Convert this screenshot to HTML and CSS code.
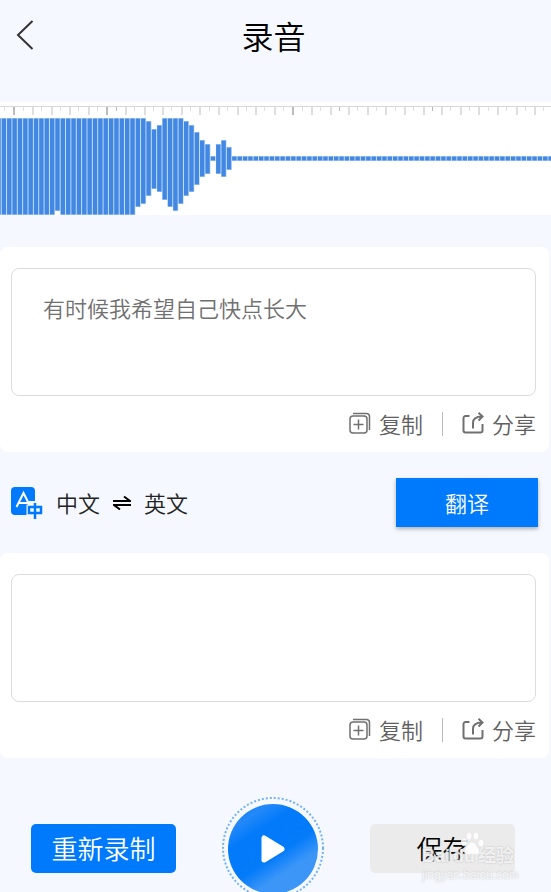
FILE: index.html
```html
<!DOCTYPE html>
<html lang="zh-CN">
<head>
  <meta charset="UTF-8">
  <meta name="viewport" content="width=device-width, initial-scale=1.0">
  <title>录音</title>
  <link rel="stylesheet" href="styles.css">
</head>
<body>
  <svg class="sprite" aria-hidden="true">
    <symbol id="icon-copy" viewBox="0 0 22 22">
      <rect x="1" y="4" width="17" height="17" rx="3"/>
      <path d="M4 1.5h14a3 3 0 0 1 2.500 3V18M9.5 7.5v10M4.5 12.5h10"/>
    </symbol>
    <symbol id="icon-share" viewBox="0 0 22 22">
      <path d="M7.500 4H3.500a2 2 0 0 0-2 2v12.500a2 2 0 0 0 2 2h15a2 2 0 0 0 2-2V12"/>
      <path d="M11 16.500V11q0-6.500 9-6.500M16.500 .8l4 3.700-4 4"/>
    </symbol>
  </svg>

  <div class="app">
    <header class="header">
      <button class="back" type="button" aria-label="返回">
        <svg width="18" height="32" viewBox="0 0 18 32"><path d="M16.500 2 2 16l14.500 14"/></svg>
      </button>
      <h1>录音</h1>
    </header>

    <svg class="wave" id="wave" role="img" aria-label="录音波形"></svg>

    <main>
      <section class="card">
        <textarea class="text" aria-label="识别文字">有时候我希望自己快点长大</textarea>
        <div class="tools">
          <button type="button"><svg><use href="#icon-copy"/></svg>复制</button>
          <span class="divider"></span>
          <button type="button"><svg class="share"><use href="#icon-share"/></svg>分享</button>
        </div>
      </section>

      <div class="translate">
        <svg class="lang-icon" width="33" height="33" viewBox="0 0 33 33" aria-hidden="true">
          <path class="lang-page" d="M4 1h16a4 4 0 0 1 4 4v10h-6v12q0 2 1 2H4a4 4 0 0 1-4-4V5a4 4 0 0 1 4-4z"/>
          <path class="lang-a" d="M5.500 21 12.500 7l7 14M8 17h9"/>
          <path class="lang-halo" d="M18 21h12v6H18zM24 17v16"/>
          <path class="lang-zh" d="M18 21h12v6H18zM24 17v16"/>
        </svg>
        <span>中文</span>
        <button class="swap" type="button" aria-label="交换语言">
          <svg width="18" height="16" viewBox="0 0 18 16"><path d="M0 6h17L11 1.500M18 10H1l6 4.500"/></svg>
        </button>
        <span>英文</span>
        <button class="btn-translate" type="button">翻译</button>
      </div>

      <section class="card">
        <textarea class="text" aria-label="翻译结果"></textarea>
        <div class="tools">
          <button type="button"><svg><use href="#icon-copy"/></svg>复制</button>
          <span class="divider"></span>
          <button type="button"><svg class="share"><use href="#icon-share"/></svg>分享</button>
        </div>
      </section>
    </main>

    <footer class="actions">
      <button class="btn" type="button">重新录制</button>
      <button class="play" type="button" aria-label="播放">
        <svg viewBox="0 0 102 102">
          <defs>
            <linearGradient id="blue" x1="0.1" y1="0" x2="0.75" y2="1">
              <stop offset="0" stop-color="#0a7cf8"/>
              <stop offset="0.16" stop-color="#2489f8"/>
              <stop offset="0.32" stop-color="#027afa"/>
              <stop offset="0.6" stop-color="#047bf9"/>
              <stop offset="0.78" stop-color="#3c96f8"/>
              <stop offset="1" stop-color="#3c96f8"/>
            </linearGradient>
          </defs>
          <circle class="ring" cx="51" cy="51" r="50"/>
          <circle cx="51" cy="52" r="45" fill="url(#blue)"/>
          <path class="triangle" d="M42 41v22l18-11z"/>
        </svg>
      </button>
      <div class="save">
        <button class="btn btn-light" type="button">保存</button>
        <div class="watermark">
          <svg width="24" height="24" viewBox="0 0 24 24" aria-hidden="true">
            <ellipse cx="4" cy="10" rx="3" ry="4"/>
            <ellipse cx="9" cy="4" rx="3" ry="4"/>
            <ellipse cx="16" cy="4" rx="3" ry="4"/>
            <ellipse cx="21" cy="11" rx="3" ry="4"/>
            <path d="M12 10c4 0 4 4 7 7 2 4-1 7-7 5-6 2-9-1-7-5 3-3 3-7 7-7z"/>
          </svg>
          <div class="brand">Bai<span>du</span><span>经验</span></div>
          <div class="site">jingyan.baidu.com</div>
        </div>
      </div>
    </footer>
  </div>

  <script>
    const wave = document.getElementById("wave");
    const step = 5.36;
    const middle = [54, 59];

    // [top, bottom] of the bars that are not full height
    const levels = {
      10: [16, 109], 25: [16, 105], 26: [16, 102], 27: [19, 94], 28: [27, 87],
      29: [23, 90], 30: [16, 98], 31: [16, 105], 32: [16, 109], 33: [16, 102],
      34: [19, 94], 35: [23, 90], 36: [30, 83], 37: [38, 75], 38: [42, 72],
      39: middle, 40: [42, 72], 41: [38, 75], 42: [45, 68]
    };

    function rect(x, y, width, height, name) {
      return `<rect class="${name}" x="${x}" y="${y}" width="${width}" height="${height}"/>`;
    }

    function draw() {
      const width = wave.clientWidth;
      let html = rect(0, 4, width, 1, "ruler");

      for (let i = 0; 4 + i * 9.3 < width; i++) {
        const long = i % 2 === 1;
        const strong = [1, 11, 12, 31, 36, 46].includes(i);
        html += rect(Math.round(4 + i * 9.3), 5, long ? 2 : 1, long ? 8 : 4, strong ? "tick strong" : "tick");
      }

      for (let i = -1; 1.4 + i * step < width; i++) {
        const [top, bottom] = levels[i] || (i < 39 ? [16, 113] : middle);
        const x = 1.4 + i * step;
        html += rect(x, top, step, bottom - top, "edge");
        html += rect(x + 0.3, top + 0.5, step - 1, bottom - top - 1, "bar");
      }

      wave.innerHTML = html;
    }

    draw();
    window.addEventListener("resize", draw);
  </script>
</body>
</html>
```

FILE: styles.css
```css
* {
  box-sizing: border-box;
  margin: 0;
  padding: 0;
}

body {
  font-family: "Noto Sans CJK SC", sans-serif;
  font-weight: 350;
  background: #f5f9ff;
  color: #222;
}

button, textarea {
  font: inherit;
  color: inherit;
  border: none;
  background: none;
}

button {
  cursor: pointer;
}

svg {
  display: block;
  fill: none;
}

.sprite {
  position: absolute;
  width: 0;
  height: 0;
}

.app {
  height: 100vh;
  overflow: hidden;
}

.header {
  display: grid;
  grid-template-columns: 48px 1fr 52px;
  align-items: start;
  height: 102px;
  padding-top: 11px;
}

.header h1 {
  font-size: 32px;
  font-weight: 350;
  line-height: 48px;
  text-align: center;
  color: #000;
}

.back {
  padding: 8px 16px;
}

.back path {
  stroke: #333;
  stroke-width: 2;
}

.wave {
  width: 100%;
  height: 113px;
  background: #fff;
}

.ruler {
  fill: #d8d8d6;
}

.tick {
  fill: #dededc;
}

.strong {
  fill: #bbb;
}

.edge {
  fill: #b8d6f6;
}

.bar {
  fill: #4288e3;
}

main {
  padding: 32px 2px 0 0;
}

.card {
  padding: 21px 13px 0 11px;
  background: #fff;
  border-radius: 8px;
}

.text {
  display: block;
  width: 100%;
  height: 128px;
  padding: 22px 31px;
  border: 1px solid #dcdcdc;
  border-radius: 8px;
  font-size: 22px;
  line-height: 32px;
  color: #707070;
  resize: none;
}

.tools {
  display: flex;
  align-items: center;
  justify-content: flex-end;
  height: 56px;
  font-size: 22px;
  line-height: 32px;
  color: #606060;
}

.tools button {
  display: flex;
  align-items: center;
  gap: 8px;
  padding-bottom: 2px;
}

.tools svg {
  width: 22px;
  height: 22px;
  stroke: #707070;
  stroke-width: 1.5;
}

.tools .share {
  stroke-width: 2;
}

.divider {
  width: 1px;
  height: 24px;
  margin: 0 19px;
  background: #bbb;
}

.translate {
  display: flex;
  align-items: center;
  height: 101px;
  padding: 0 11px;
  font-size: 22px;
  line-height: 32px;
}

.translate span {
  padding-bottom: 2px;
}

.lang-icon {
  margin-right: 12px;
}

.lang-page {
  fill: #007afc;
}

.lang-a {
  stroke: #fff;
  stroke-width: 2;
}

.lang-halo {
  stroke: #f5f9ff;
  stroke-width: 5;
}

.lang-zh {
  stroke: #007afc;
  stroke-width: 2.5;
}

.swap {
  margin: 0 13px;
}

.swap path {
  stroke: #000;
  stroke-width: 2;
}

.btn-translate {
  width: 142px;
  height: 49px;
  padding-bottom: 2px;
  margin-left: auto;
  background: #007afc;
  color: #fff;
  box-shadow: 0 2px 4px rgba(0, 0, 0, 0.3);
}

.actions {
  display: flex;
  align-items: center;
  justify-content: space-between;
  padding: 39px 36px 0 31px;
}

.btn {
  width: 145px;
  height: 49px;
  border-radius: 5px;
  background: #007afc;
  color: #fff;
  font-size: 26px;
  line-height: 48px;
}

.btn-light {
  background: #ebebeb;
  color: #000;
}

.play {
  width: 102px;
  height: 102px;
}

.ring {
  stroke: #73b2f8;
  stroke-width: 2;
  stroke-dasharray: 2 2;
}

.triangle {
  fill: #fff;
  stroke: #fff;
  stroke-width: 5;
  stroke-linejoin: round;
}

.save {
  position: relative;
}

/* faint brand mark lying over the save button */
.watermark {
  position: absolute;
  top: 8px;
  left: 52px;
  color: rgba(255, 255, 255, 0.75);
  font-family: "Liberation Sans", "Noto Sans CJK SC", sans-serif;
  font-weight: bold;
  white-space: nowrap;
  text-shadow: 0 0 2px #bbb;
  pointer-events: none;
}

.watermark svg {
  position: absolute;
  top: 0;
  left: 38px;
  fill: rgba(255, 255, 255, 0.85);
  stroke: #ddd;
  stroke-width: 0.5;
}

.brand {
  display: flex;
  gap: 3px;
  padding-top: 14px;
  font-size: 18px;
  line-height: 20px;
}

.site {
  padding-top: 2px;
  font-size: 12px;
  font-weight: normal;
  line-height: 14px;
}
```
